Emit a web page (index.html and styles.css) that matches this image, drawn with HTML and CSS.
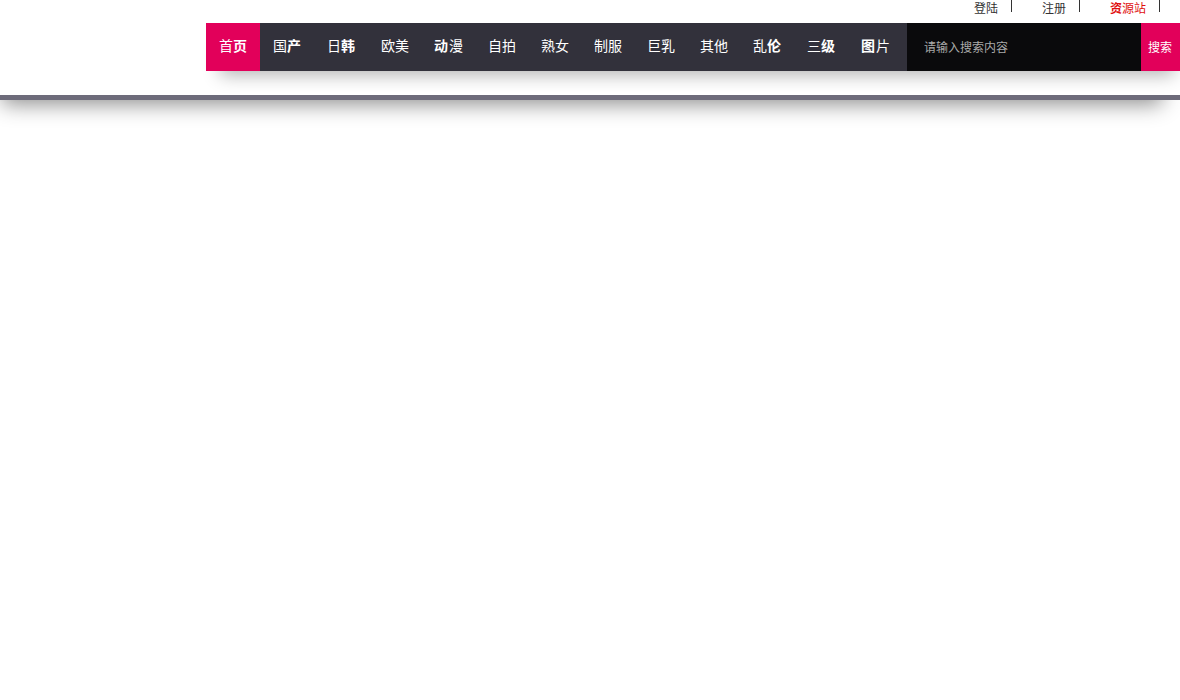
FILE: index.html
```
<!DOCTYPE html>
<html lang="zh-CN">
<head>
    <meta charset="UTF-8">
    <meta name="viewport" content="width=device-width, initial-scale=1.0">
    <title>首页</title>
    <link rel="stylesheet" href="styles.css">
</head>
<body>

    <header class="header">
        <!-- Account links -->
        <ul class="top-links">
            <li><a href="#">登陆</a></li>
            <li><a href="#">注册</a></li>
            <li><a href="#" class="red"><b>资</b>源站</a></li>
        </ul>

        <!-- Menu and search -->
        <div class="menu-bar">
            <nav class="menu">
                <a href="#" class="active">首<b>页</b></a>
                <a href="#">国<b>产</b></a>
                <a href="#">日<b>韩</b></a>
                <a href="#">欧美</a>
                <a href="#"><b>动</b>漫</a>
                <a href="#">自拍</a>
                <a href="#">熟女</a>
                <a href="#">制服</a>
                <a href="#">巨乳</a>
                <a href="#">其他</a>
                <a href="#">乱<b>伦</b></a>
                <a href="#">三<b>级</b></a>
                <a href="#"><b>图</b>片</a>
            </nav>
            <form class="search">
                <input type="text" name="wd" placeholder="请输入搜索内容" aria-label="请输入搜索内容">
                <button type="submit">搜索</button>
            </form>
        </div>
    </header>

</body>
</html>
```

FILE: styles.css
```
* {
    margin: 0;
    padding: 0;
    box-sizing: border-box;
}

body {
    min-height: 100vh;
    background: #fff;
    font-family: "Noto Sans CJK SC", sans-serif;
    font-size: 12px;
    color: #333;
}

a {
    color: inherit;
    text-decoration: none;
}

b {
    font-weight: 700;
}

.header {
    padding-bottom: 24px;
    border-bottom: 5px solid #6d6b7a;
    box-shadow: -8px 14px 20px -10px rgba(0, 0, 0, 0.45);
}

.top-links {
    display: flex;
    justify-content: flex-end;
    gap: 30px;
    padding: 0 20px 11px 0;
    list-style: none;
}

.top-links li {
    height: 12px;
    padding-right: 13px;
    border-right: 1px solid #333;
    line-height: 15px;
}

.top-links .red {
    color: #e01010;
}

.menu-bar {
    display: flex;
    width: fit-content;
    height: 48px;
    margin-left: auto;
    background: #32313b;
    box-shadow: 4px 14px 18px -10px rgba(0, 0, 0, 0.3);
}

.menu {
    display: flex;
    padding-right: 5px;
}

.menu a {
    padding: 0 12px 0 13px;
    font-size: 14px;
    line-height: 45px;
    color: #fff;
}

.menu b {
    margin-right: 1px;
}

.menu .active {
    background: #e2005a;
}

.search {
    display: flex;
}

.search input {
    width: 234px;
    padding: 0 17px 2px;
    border: none;
    background: #0a0a0c;
    font: inherit;
    color: #fff;
}

.search input::placeholder {
    color: #aaa;
}

.search button {
    padding: 0 8px 2px 7px;
    border: none;
    background: #e2005a;
    font: inherit;
    color: #fff;
    cursor: pointer;
}
```
